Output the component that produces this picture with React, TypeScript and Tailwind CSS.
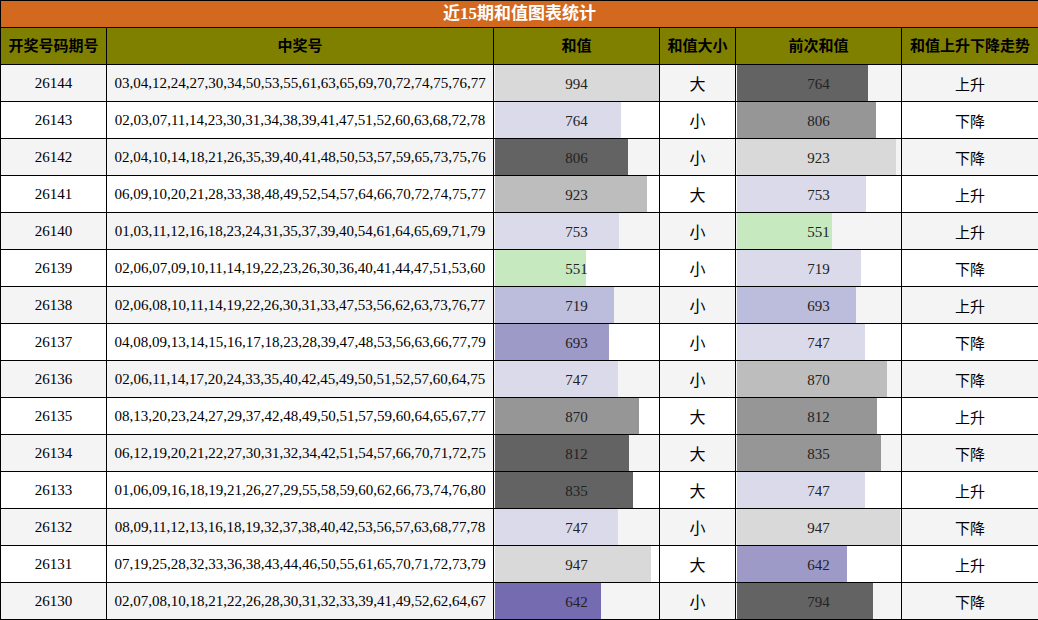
const rows: [string, string, number, string, string, number, string, string, string][] = [
  ["26144","03,04,12,24,27,30,34,50,53,55,61,63,65,69,70,72,74,75,76,77",994,"#d9d9d9","大",764,"#636363","上升",""],
  ["26143","02,03,07,11,14,23,30,31,34,38,39,41,47,51,52,60,63,68,72,78",764,"#dadaeb","小",806,"#969696","下降",""],
  ["26142","02,04,10,14,18,21,26,35,39,40,41,48,50,53,57,59,65,73,75,76",806,"#636363","小",923,"#d9d9d9","下降",""],
  ["26141","06,09,10,20,21,28,33,38,48,49,52,54,57,64,66,70,72,74,75,77",923,"#bdbdbd","大",753,"#dadaeb","上升",""],
  ["26140","01,03,11,12,16,18,23,24,31,35,37,39,40,54,61,64,65,69,71,79",753,"#dadaeb","小",551,"#c7e9c0","上升",""],
  ["26139","02,06,07,09,10,11,14,19,22,23,26,30,36,40,41,44,47,51,53,60",551,"#c7e9c0","小",719,"#dadaeb","下降",""],
  ["26138","02,06,08,10,11,14,19,22,26,30,31,33,47,53,56,62,63,73,76,77",719,"#bcbddc","小",693,"#bcbddc","上升",""],
  ["26137","04,08,09,13,14,15,16,17,18,23,28,39,47,48,53,56,63,66,77,79",693,"#9e9ac8","小",747,"#dadaeb","下降",""],
  ["26136","02,06,11,14,17,20,24,33,35,40,42,45,49,50,51,52,57,60,64,75",747,"#dadaeb","小",870,"#bdbdbd","下降",""],
  ["26135","08,13,20,23,24,27,29,37,42,48,49,50,51,57,59,60,64,65,67,77",870,"#969696","大",812,"#969696","上升",""],
  ["26134","06,12,19,20,21,22,27,30,31,32,34,42,51,54,57,66,70,71,72,75",812,"#636363","大",835,"#969696","下降",""],
  ["26133","01,06,09,16,18,19,21,26,27,29,55,58,59,60,62,66,73,74,76,80",835,"#636363","大",747,"#dadaeb","上升",""],
  ["26132","08,09,11,12,13,16,18,19,32,37,38,40,42,53,56,57,63,68,77,78",747,"#dadaeb","小",947,"#d9d9d9","下降",""],
  ["26131","07,19,25,28,32,33,36,38,43,44,46,50,55,61,65,70,71,72,73,79",947,"#d9d9d9","大",642,"#9e9ac8","上升",""],
  ["26130","02,07,08,10,18,21,22,26,28,30,31,32,33,39,41,49,52,62,64,67",642,"#756bb1","小",794,"#636363","下降",""],
];

const serif = { fontFamily: '"Liberation Serif", "Noto Sans CJK SC", serif' };
const cjk = { fontFamily: '"Liberation Sans", "Noto Sans CJK SC", sans-serif' };

function Bar({ v, c, pct }: { v: number; c: string; pct: number }) {
  return (
    <td className="border border-black p-0 relative h-[37px]">
      <div className="absolute left-[1px] top-0 bottom-0" style={{ width: `${pct}%`, background: c }} />
      <span className="relative text-[15px] text-[#222]" style={serif}>{v}</span>
    </td>
  );
}

export default function App() {
  return (
    <div className="w-[1038px] h-[620px] bg-white overflow-hidden">
      <table className="border-collapse w-[1038px] table-fixed text-center text-black">
        <colgroup>
          <col className="w-[106px]" />
          <col className="w-[387px]" />
          <col className="w-[166px]" />
          <col className="w-[76px]" />
          <col className="w-[166px]" />
          <col className="w-[137px]" />
        </colgroup>
        <thead>
          <tr>
            <th colSpan={6} className="border border-black bg-[#d2691e] text-white text-[17px] font-bold h-[27px] p-0" style={cjk}>
              <span style={{ fontFamily: '"Liberation Serif", "Noto Sans CJK SC", serif' }}>近15期和值图表统计</span>
            </th>
          </tr>
          <tr className="bg-[#808000] text-[15px] font-bold h-[37px]" style={cjk}>
            <th className="border border-black p-0 font-bold">开奖号码期号</th>
            <th className="border border-black p-0 font-bold">中奖号</th>
            <th className="border border-black p-0 font-bold">和值</th>
            <th className="border border-black p-0 font-bold">和值大小</th>
            <th className="border border-black p-0 font-bold">前次和值</th>
            <th className="border border-black p-0 font-bold">和值上升下降走势</th>
          </tr>
        </thead>
        <tbody>
          {rows.map((r, i) => (
            <tr key={r[0]} className={i % 2 === 0 ? "bg-[#f4f4f4]" : "bg-white"}>
              <td className="border border-black p-0 h-[37px] text-[15px]" style={serif}>{r[0]}</td>
              <td className="border border-black p-0 text-[15px] whitespace-nowrap" style={serif}>{r[1]}</td>
              <Bar v={r[2]} c={r[3]} pct={r[2] / 10} />
              <td className="border border-black p-0 text-[16px] pt-[4px]" style={cjk}>{r[4]}</td>
              <Bar v={r[5]} c={r[6]} pct={r[5] / 9.6} />
              <td className="border border-black p-0 text-[15px] pt-[4px]" style={cjk}>{r[7]}</td>
            </tr>
          ))}
        </tbody>
      </table>
    </div>
  );
}
